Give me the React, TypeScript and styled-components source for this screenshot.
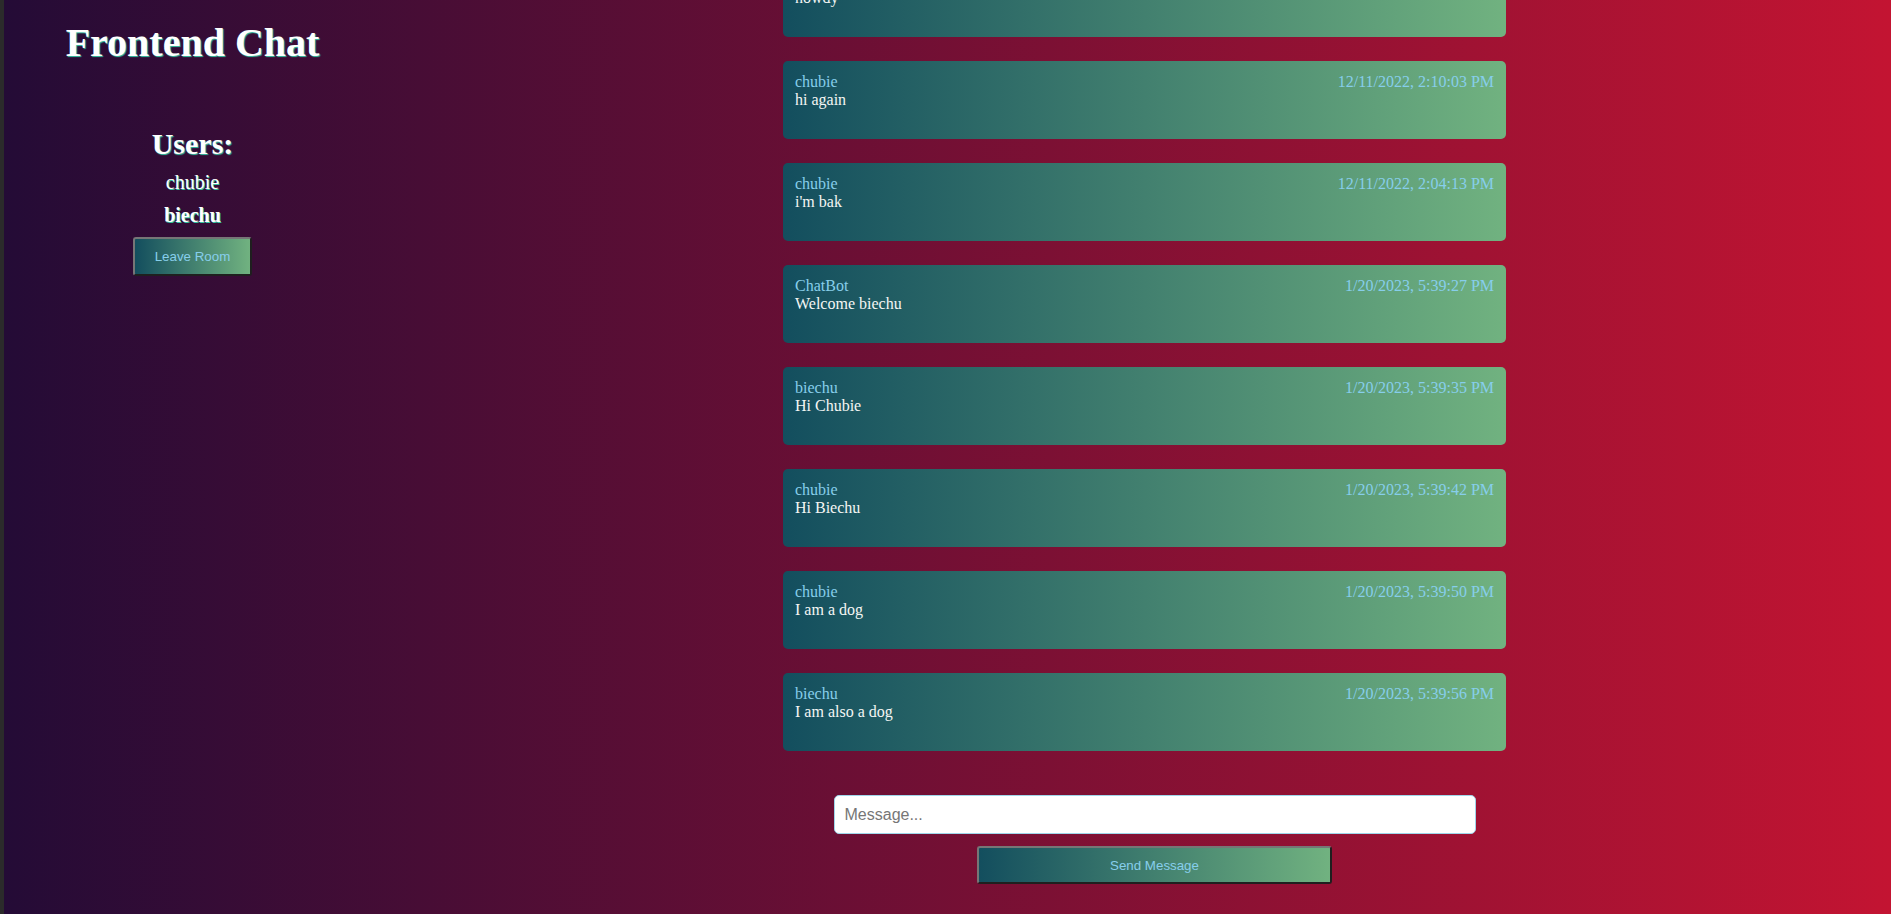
import React from "react";
import styled, { createGlobalStyle } from "styled-components";

const GlobalStyle = createGlobalStyle`
  html, body {
    margin: 0;
    padding: 0;
    height: 100%;
    overflow: hidden;
  }
  body {
    font-family: "Liberation Serif", "Times New Roman", serif;
  }
  * { box-sizing: border-box; }
`;

const Page = styled.div`
  display: flex;
  height: 100vh;
  border-left: 4px solid #2b2b2b;
  background: linear-gradient(to right, #240b36, #c31432);
  color: #f2f5f4;
`;

const Sidebar = styled.aside`
  width: 377px;
  flex-shrink: 0;
  display: flex;
  flex-direction: column;
  align-items: center;
`;

const Title = styled.h1`
  margin: 20px 0 0;
  font-size: 40px;
  font-weight: 700;
  line-height: 46px;
  color: #ffffff;
  text-shadow: 1px 1px 1px #35c3a3;
  white-space: nowrap;
`;

const UsersHeading = styled.h2`
  margin: 61px 0 0;
  font-size: 30px;
  line-height: 34px;
  font-weight: 700;
  color: #ffffff;
  text-shadow: 1px 1px 1px #35c3a3;
`;

const UserList = styled.ul`
  list-style: none;
  margin: 10px 0 0;
  padding: 0;
  display: flex;
  flex-direction: column;
  align-items: center;
  gap: 10px;
`;

const UserItem = styled.li<{ $current?: boolean }>`
  font-size: 20px;
  line-height: 23px;
  font-weight: ${(p) => (p.$current ? 700 : 400)};
  color: #ffffff;
  text-shadow: 1px 1px 0 #35c3a3;
`;

const GradientButton = styled.button<{ $width: number; $height: number }>`
  width: ${(p) => p.$width}px;
  height: ${(p) => p.$height}px;
  border-width: 2px;
  border-style: solid;
  border-color: #767676 #1f1f1f #1f1f1f #767676;
  border-radius: 3px;
  background: linear-gradient(to right, #134e5e, #71b280);
  color: #87ceeb;
  font-family: "Liberation Sans", Arial, sans-serif;
  font-size: 13.33px;
  cursor: pointer;
  padding: 0;
`;

const LeaveButton = styled(GradientButton)`
  margin-top: 10px;
`;

const ChatColumn = styled.main`
  width: 743px;
  margin-left: 402px;
  display: flex;
  flex-direction: column;
  height: 100%;
`;

const MessageList = styled.div`
  height: 751px;
  overflow: hidden;
  display: flex;
  flex-direction: column;
  justify-content: flex-end;
  gap: 24px;
  padding-right: 20px;
`;

const Card = styled.div`
  flex-shrink: 0;
  height: 78px;
  padding: 12px 12px 10px;
  border-radius: 5px;
  background: linear-gradient(to right, #134e5e, #71b280);
  font-size: 16px;
`;

const CardHeader = styled.div`
  display: flex;
  justify-content: space-between;
  color: #87ceeb;
`;

const CardText = styled.div`
  color: #f4f6f4;
`;

const Form = styled.form`
  margin-top: 44px;
  display: flex;
  flex-direction: column;
  align-items: center;
  gap: 12px;
`;

const MessageInput = styled.input`
  width: 642px;
  height: 39px;
  padding: 0 10px;
  border: 1px solid #9fd6ea;
  border-radius: 5px;
  background: #ffffff;
  font-family: "Liberation Sans", Arial, sans-serif;
  font-size: 16px;
  color: #222;
  outline: none;
  &::placeholder {
    color: #767676;
  }
`;

const users = [
  { name: "chubie", current: false },
  { name: "biechu", current: true },
];

const messages = [
  { user: "chubie", time: "12/11/2022, 1:59:40 PM", text: "howdy" },
  { user: "chubie", time: "12/11/2022, 2:10:03 PM", text: "hi again" },
  { user: "chubie", time: "12/11/2022, 2:04:13 PM", text: "i'm bak" },
  { user: "ChatBot", time: "1/20/2023, 5:39:27 PM", text: "Welcome biechu" },
  { user: "biechu", time: "1/20/2023, 5:39:35 PM", text: "Hi Chubie" },
  { user: "chubie", time: "1/20/2023, 5:39:42 PM", text: "Hi Biechu" },
  { user: "chubie", time: "1/20/2023, 5:39:50 PM", text: "I am a dog" },
  { user: "biechu", time: "1/20/2023, 5:39:56 PM", text: "I am also a dog" },
];

export default function App() {
  return (
    <>
      <GlobalStyle />
      <Page>
        <Sidebar>
          <Title>Frontend Chat</Title>
          <UsersHeading>Users:</UsersHeading>
          <UserList>
            {users.map((u) => (
              <UserItem key={u.name} $current={u.current}>
                {u.name}
              </UserItem>
            ))}
          </UserList>
          <LeaveButton $width={119} $height={39} type="button">
            Leave Room
          </LeaveButton>
        </Sidebar>
        <ChatColumn>
          <MessageList>
            {messages.map((m, i) => (
              <Card key={i}>
                <CardHeader>
                  <span>{m.user}</span>
                  <span>{m.time}</span>
                </CardHeader>
                <CardText>{m.text}</CardText>
              </Card>
            ))}
          </MessageList>
          <Form onSubmit={(e) => e.preventDefault()}>
            <MessageInput placeholder="Message..." />
            <GradientButton $width={355} $height={38} type="submit">
              Send Message
            </GradientButton>
          </Form>
        </ChatColumn>
      </Page>
    </>
  );
}
